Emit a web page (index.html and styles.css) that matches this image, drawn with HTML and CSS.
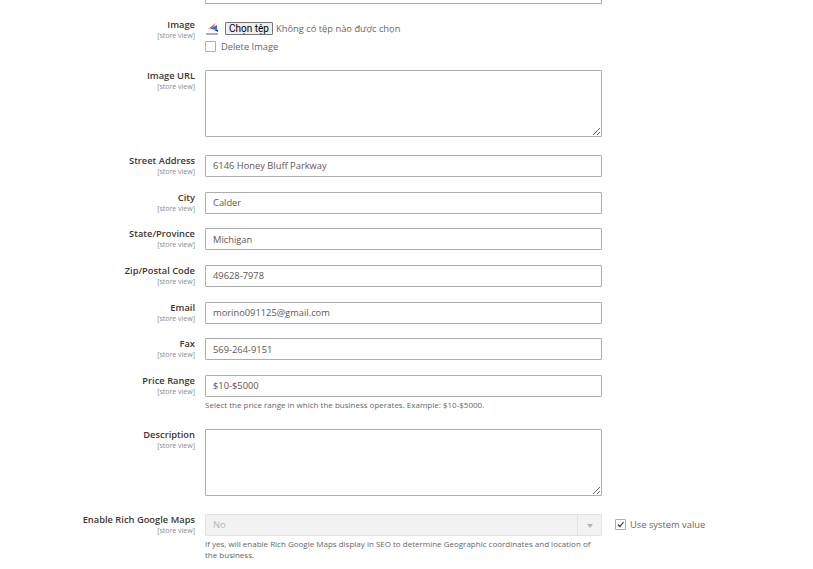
FILE: index.html
```html
<!DOCTYPE html>
<html lang="vi">
<head>
    <meta charset="UTF-8">
    <title>Store Locator</title>
    <link rel="stylesheet" href="styles.css">
</head>
<body>
    <div class="form">
        <div class="top-edge"></div>

        <div class="row row-image">
            <div class="label"><span>Image</span><small>[store view]</small></div>
            <div class="control">
                <div class="file-line">
                    <svg class="thumb" width="14" height="15" viewBox="0 0 14 15">
                        <path d="M11 2 L3 8 L8 6.5 Z" fill="#e2455a"/>
                        <path d="M12 4 L5 8 L12 9 Z" fill="#2f6fd0"/>
                        <path d="M9 9 L13 9 L13 11 Z" fill="#27337f"/>
                        <rect x="1" y="12" width="12" height="2" fill="#a5a9d2"/>
                    </svg>
                    <button class="file-btn" type="button">Chọn tệp</button>
                    <span class="file-name">Không có tệp nào được chọn</span>
                </div>
                <label class="check-line"><span class="check"></span>Delete Image</label>
            </div>
        </div>

        <div class="row row-text">
            <div class="label"><span>Image URL</span><small>[store view]</small></div>
            <div class="control"><textarea class="area"></textarea></div>
        </div>

        <div class="row">
            <div class="label"><span>Street Address</span><small>[store view]</small></div>
            <div class="control"><input class="input" value="6146 Honey Bluff Parkway"></div>
        </div>
        <div class="row">
            <div class="label"><span>City</span><small>[store view]</small></div>
            <div class="control"><input class="input" value="Calder"></div>
        </div>
        <div class="row">
            <div class="label"><span>State/Province</span><small>[store view]</small></div>
            <div class="control"><input class="input" value="Michigan"></div>
        </div>
        <div class="row">
            <div class="label"><span>Zip/Postal Code</span><small>[store view]</small></div>
            <div class="control"><input class="input" value="49628-7978"></div>
        </div>
        <div class="row">
            <div class="label"><span>Email</span><small>[store view]</small></div>
            <div class="control"><input class="input" value="morino091125@gmail.com"></div>
        </div>
        <div class="row">
            <div class="label"><span>Fax</span><small>[store view]</small></div>
            <div class="control"><input class="input" value="569-264-9151"></div>
        </div>
        <div class="row row-price">
            <div class="label"><span>Price Range</span><small>[store view]</small></div>
            <div class="control">
                <input class="input" value="$10-$5000">
                <p class="note">Select the price range in which the business operates. Example: $10-$5000.</p>
            </div>
        </div>

        <div class="row row-text">
            <div class="label"><span>Description</span><small>[store view]</small></div>
            <div class="control"><textarea class="area"></textarea></div>
        </div>

        <div class="row">
            <div class="label"><span>Enable Rich Google Maps</span><small>[store view]</small></div>
            <div class="control">
                <div class="select"><span class="select-value">No</span><span class="select-arrow"></span></div>
                <p class="note">If yes, will enable Rich Google Maps display in SEO to determine Geographic coordinates and location of the business.</p>
            </div>
            <label class="use-default">
                <span class="check">
                    <svg width="9" height="9" viewBox="0 0 9 9"><path d="M2 4.5 L4 6.5 L7.5 2" fill="none" stroke="#41362f" stroke-width="1.2"/></svg>
                </span>
                Use system value
            </label>
        </div>
    </div>
</body>
</html>
```

FILE: styles.css
```css
html, body {
    margin: 0;
    background: #fff;
}
body {
    font-family: "Open Sans", "Noto Sans", sans-serif;
    font-size: 9.33px;
    color: #41362f;
    overflow: hidden;
}
.top-edge {
    width: 395px;
    height: 3px;
    margin-left: 205px;
    border: 1px solid #adadad;
    border-top: none;
    margin-bottom: 14.67px;
}
.row {
    display: flex;
    align-items: flex-start;
    margin-bottom: 14.67px;
}
.row-image {
    margin-bottom: 17.33px;
}
.row-text {
    margin-bottom: 18px;
}
.row-price {
    margin-bottom: 18.3px;
}
.label {
    width: 195px;
    flex: none;
    text-align: right;
    font-weight: 600;
    color: #41362f;
    line-height: 11px;
}
.label span {
    display: block;
}
.label small {
    display: block;
    margin-top: 1px;
    font-size: 7px;
    font-weight: 400;
    line-height: 9px;
    color: #8a8a8a;
}
.control {
    width: 397px;
    flex: none;
    margin-left: 10px;
}
.input {
    display: block;
    box-sizing: border-box;
    width: 100%;
    height: 22px;
    padding: 0 7px;
    border: 1px solid #adadad;
    border-radius: 1px;
    background: #fff;
    font: 9.33px "Open Sans", sans-serif;
    color: #5f5650;
    outline: none;
}
.area {
    display: block;
    box-sizing: border-box;
    width: 100%;
    height: 67px;
    margin: 0;
    border: 1px solid #adadad;
    border-radius: 1px;
    background: #fff;
    outline: none;
}
.file-line {
    display: flex;
    align-items: center;
    height: 15px;
    margin-top: 2px;
}
.thumb {
    margin-right: 6px;
    flex: none;
}
.file-btn {
    box-sizing: border-box;
    width: 48px;
    height: 13px;
    padding: 0;
    margin-right: 3px;
    border: 1px solid #767676;
    border-radius: 1px;
    background: #efefef;
    font: 10px "Roboto", "Liberation Sans", sans-serif;
    color: #000;
}
.file-name {
    font-size: 9.33px;
    color: #6d6560;
}
.check-line {
    display: flex;
    align-items: center;
    margin-top: 5px;
    height: 12px;
    color: #6d6560;
}
.check {
    box-sizing: border-box;
    display: flex;
    align-items: center;
    justify-content: center;
    flex: none;
    width: 11px;
    height: 11px;
    margin-right: 5px;
    border: 1px solid #adadad;
    border-radius: 1px;
    background: #fff;
}
.note {
    margin: 3px 0 0;
    font-size: 8px;
    line-height: 10.7px;
    color: #666;
}
.select {
    box-sizing: border-box;
    display: flex;
    align-items: center;
    justify-content: space-between;
    height: 22px;
    border: 1px solid #e3e3e3;
    border-radius: 1px;
    background: #f2f2f2;
}
.select-value {
    padding-left: 7px;
    color: #b5b5b5;
}
.select-arrow {
    position: relative;
    width: 23px;
    height: 100%;
    border-left: 1px solid #e3e3e3;
}
.select-arrow::after {
    content: "";
    position: absolute;
    left: 9px;
    top: 9px;
    border-left: 3px solid transparent;
    border-right: 3px solid transparent;
    border-top: 4px solid #b5b5b5;
}
.use-default {
    display: flex;
    align-items: center;
    margin-left: 13px;
    height: 21px;
    color: #6d6560;
}
.use-default .check {
    margin-right: 4px;
}
```
